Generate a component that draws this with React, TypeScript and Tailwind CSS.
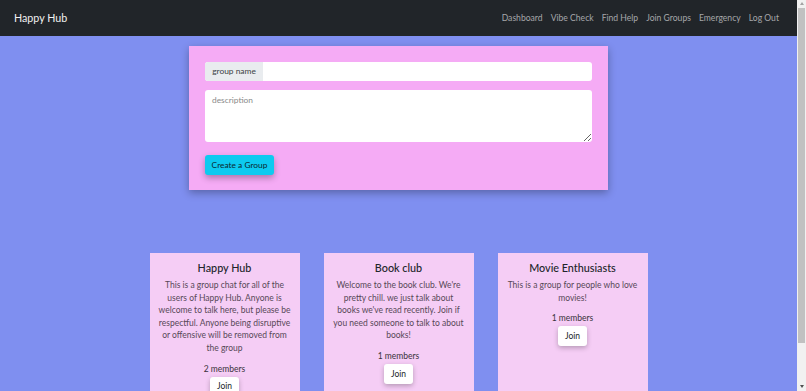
import React from 'react'

const links = ['Dashboard', 'Vibe Check', 'Find Help', 'Join Groups', 'Emergency', 'Log Out']

const groups = [
  {
    name: 'Happy Hub',
    description:
      'This is a group chat for all of the users of Happy Hub. Anyone is welcome to talk here, but please be respectful. Anyone being disruptive or offensive will be removed from the group',
    members: 2,
  },
  {
    name: 'Book club',
    description:
      "Welcome to the book club. We're pretty chill. we just talk about books we've read recently. Join if you need someone to talk to about books!",
    members: 1,
  },
  {
    name: 'Movie Enthusiasts',
    description: 'This is a group for people who love movies!',
    members: 1,
  },
]

function GroupCard({ name, description, members }: { name: string; description: string; members: number }) {
  return (
    <div className="w-[150px] bg-[#f5cdf5] px-[8px] pt-[7px] pb-[14px] flex flex-col items-center text-center">
      <h5 className="text-[10.8px] leading-[16px] font-medium text-[#212529]">{name}</h5>
      <p className="mt-[3px] text-[8.5px] leading-[12.6px] text-[#574857]">{description}</p>
      <div className="mt-[8px] text-[8.5px] leading-[13px] text-[#3a333a]">{members} members</div>
      <button className="mt-[1px] h-[20px] w-[29px] bg-white rounded-[3px] text-[8.5px] text-[#212529] shadow-[0_2px_5px_rgba(0,0,0,0.25)]">
        Join
      </button>
    </div>
  )
}

// fake browser scrollbar on the right edge
function Scrollbar() {
  return (
    <div className="w-[9px] h-full bg-[#f1f1f1] flex flex-col items-center">
      <div className="h-[7px] flex items-center justify-center">
        <div className="w-0 h-0 border-l-[2.5px] border-r-[2.5px] border-b-[3px] border-l-transparent border-r-transparent border-b-[#a3a3a3]" />
      </div>
      <div className="mt-[1px] w-[7px] h-[335px] bg-[#c1c1c1]" />
      <div className="flex-1" />
      <div className="h-[9px] flex items-center justify-center">
        <div className="w-0 h-0 border-l-[2.5px] border-r-[2.5px] border-t-[3px] border-l-transparent border-r-transparent border-t-[#505050]" />
      </div>
    </div>
  )
}

export default function App() {
  return (
    <div className="flex h-[391px] overflow-hidden" style={{ fontFamily: 'Lato, "Open Sans", sans-serif' }}>
      <div className="flex-1 min-w-0 overflow-hidden bg-[#7f8ff0]">
        <nav className="h-[36px] bg-[#212529] flex items-center justify-between pl-[14px] pr-[18px]">
          <a className="text-[10.7px] text-[#f1f1f1]">Happy Hub</a>
          <div className="flex gap-[8px]">
            {links.map(l => (
              <a key={l} className="text-[8.6px] text-[#a5a7a9]">
                {l}
              </a>
            ))}
          </div>
        </nav>

        <div className="flex justify-center mt-[10px]">
          <div className="w-[419px] bg-[#f5abf5] p-[16px] pb-[15px] shadow-[0_3px_8px_rgba(0,0,0,0.3)]">
            <div className="flex h-[19px] rounded-[3px] overflow-hidden bg-white">
              <span className="w-[58px] bg-[#e9ecef] text-[8.4px] text-[#3b3f44] flex items-center justify-center">
                group name
              </span>
              <input className="flex-1 min-w-0 outline-none px-[6px] text-[8.4px]" />
            </div>
            <textarea
              placeholder="description"
              className="mt-[9px] block w-full h-[52px] bg-white rounded-[3px] px-[7px] py-[4px] text-[8.4px] text-[#212529] placeholder:text-[#8a8a8a] outline-none"
            />
            <button className="mt-[13px] h-[20px] w-[69px] bg-[#0dcaf0] rounded-[3px] text-[8.4px] text-[#0b2830] shadow-[0_3px_6px_rgba(0,0,0,0.3)]">
              Create a Group
            </button>
          </div>
        </div>

        <div className="flex justify-center items-stretch gap-[24px] mt-[63px]">
          {groups.map(g => (
            <GroupCard key={g.name} {...g} />
          ))}
        </div>
      </div>
      <Scrollbar />
    </div>
  )
}
